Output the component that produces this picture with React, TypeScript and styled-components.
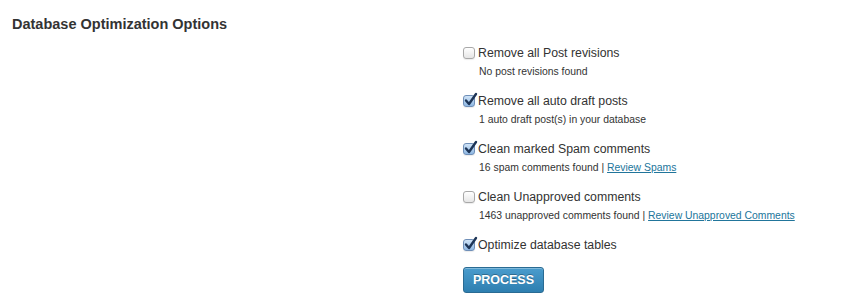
import React from "react";
import styled, { createGlobalStyle } from "styled-components";

const Global = createGlobalStyle`
  html, body { margin: 0; padding: 0; background: #fff; }
  body { font-family: "Liberation Sans", Arial, sans-serif; color: #333; }
`;

const Page = styled.div`
  padding: 16px 12px 0 12px;
`;

const Heading = styled.h3`
  margin: 0;
  font-size: 14.5px;
  font-weight: bold;
  line-height: 17px;
  color: #333;
`;

const Options = styled.div`
  margin-left: 451px;
  margin-top: 12px;
  display: flex;
  flex-direction: column;
`;

const Option = styled.div<{ $short?: boolean }>`
  height: ${(p) => (p.$short ? "27px" : "48px")};
  display: flex;
  flex-direction: column;
`;

const LabelRow = styled.label`
  display: flex;
  align-items: center;
  gap: 3px;
  font-size: 12.3px;
  line-height: 16px;
  color: #333;
`;

const Box = styled.span<{ $checked: boolean }>`
  width: 12px;
  height: 12px;
  border-radius: 3px;
  box-sizing: border-box;
  border: 1px solid ${(p) => (p.$checked ? "#6f8fb8" : "#a8a8a8")};
  background: ${(p) =>
    p.$checked
      ? "linear-gradient(#cfe3f7, #8fb8e3)"
      : "linear-gradient(#ffffff, #e6e6e6)"};
  position: relative;
  flex: none;
  box-shadow: 0 1px 1px rgba(0, 0, 0, 0.08);
`;

const Check = styled.svg`
  position: absolute;
  left: 0px;
  top: -3px;
  width: 13px;
  height: 13px;
  overflow: visible;
`;

const Note = styled.div`
  margin-left: 16px;
  margin-top: 4px;
  font-size: 10.4px;
  line-height: 13px;
  color: #333;
`;

const Link = styled.a`
  color: #21759b;
  text-decoration: underline;
`;

const Button = styled.button`
  width: 81px;
  height: 26px;
  margin-top: 3px;
  border: 1px solid #2a6b93;
  border-radius: 3px;
  background: linear-gradient(#4a9ccd, #2e7fb0);
  color: #fff;
  font-family: "Liberation Sans", Arial, sans-serif;
  font-size: 12.5px;
  font-weight: bold;
  text-shadow: 0 -1px 0 rgba(0, 0, 0, 0.3);
  padding: 0;
  box-shadow: inset 0 1px 0 rgba(255, 255, 255, 0.3);
`;

type Item = {
  label: string;
  checked: boolean;
  note?: string;
  link?: string;
};

const items: Item[] = [
  { label: "Remove all Post revisions", checked: false, note: "No post revisions found" },
  { label: "Remove all auto draft posts", checked: true, note: "1 auto draft post(s) in your database" },
  { label: "Clean marked Spam comments", checked: true, note: "16 spam comments found", link: "Review Spams" },
  { label: "Clean Unapproved comments", checked: false, note: "1463 unapproved comments found", link: "Review Unapproved Comments" },
  { label: "Optimize database tables", checked: true },
];

const CheckBox = ({ checked }: { checked: boolean }) => (
  <Box $checked={checked}>
    {checked && (
      <Check viewBox="0 0 13 13">
        <path d="M2 7.5 L5 11 L12 1" fill="none" stroke="#1d3557" strokeWidth="2.4" strokeLinecap="round" strokeLinejoin="round" />
      </Check>
    )}
  </Box>
);

export default function App() {
  return (
    <>
      <Global />
      <Page>
        <Heading>Database Optimization Options</Heading>
        <Options>
          {items.map((it) => (
            <Option key={it.label} $short={!it.note}>
              <LabelRow>
                <CheckBox checked={it.checked} />
                {it.label}
              </LabelRow>
              {it.note && (
                <Note>
                  {it.note}
                  {it.link && (
                    <>
                      {" | "}
                      <Link href="#">{it.link}</Link>
                    </>
                  )}
                </Note>
              )}
            </Option>
          ))}
          <Button>PROCESS</Button>
        </Options>
      </Page>
    </>
  );
}
